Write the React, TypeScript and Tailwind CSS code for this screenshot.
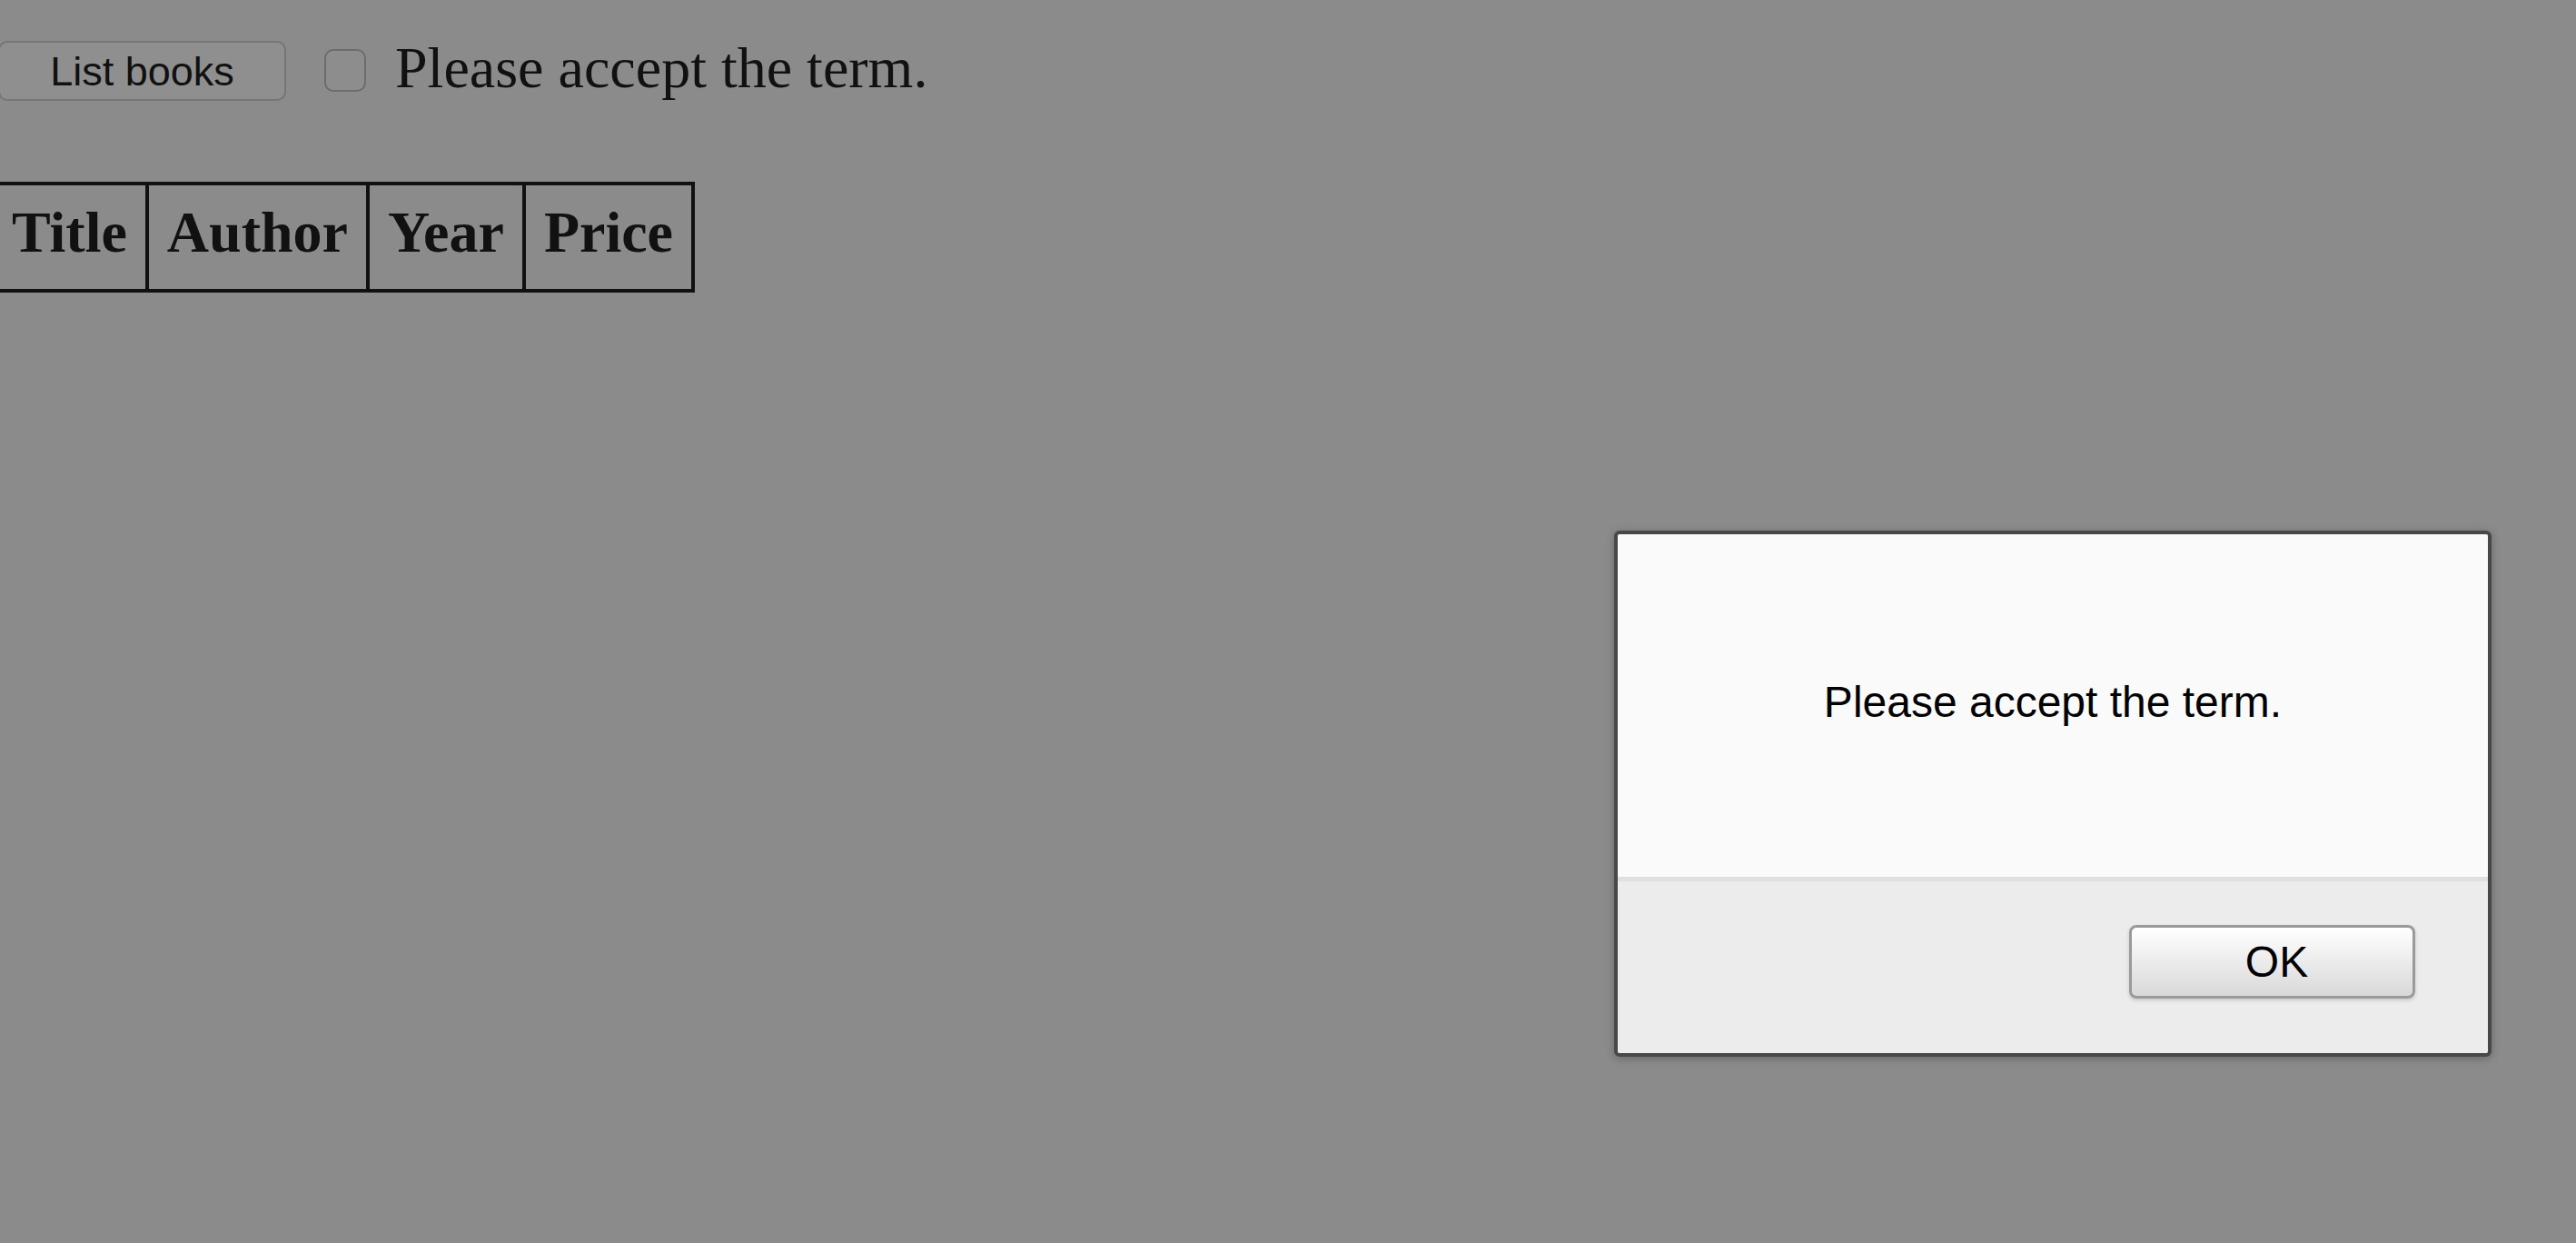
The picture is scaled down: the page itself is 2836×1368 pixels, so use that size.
import React from 'react';

const columns = ['Title', 'Author', 'Year', 'Price'];

function AlertDialog() {
  return (
    <div className="absolute left-[1777px] top-[584px] w-[966px] h-[579px] flex flex-col border-4 border-[#484848] rounded-[6px] overflow-hidden shadow-[0_2px_10px_rgba(0,0,0,0.25)]">
      {/* message */}
      <div className="h-[377px] bg-[#fafafa] flex items-center justify-center pb-[8px]">
        <p className="font-['Liberation_Sans',Arial,sans-serif] text-[48px] leading-normal text-black">
          Please accept the term.
        </p>
      </div>
      <div className="h-[5px] bg-[#e0e0e0]" />
      {/* actions */}
      <div className="flex-1 bg-[#ececec] flex justify-end items-start pt-[48px] pr-[80px]">
        <button className="w-[315px] h-[81px] rounded-[8px] border-[3px] border-[#9a9a9a] bg-gradient-to-b from-[#ffffff] to-[#d9d9d9] shadow-[0_2px_4px_rgba(0,0,0,0.15)] font-['Liberation_Sans',Arial,sans-serif] text-[48px] text-black pl-[10px]">
          OK
        </button>
      </div>
    </div>
  );
}

export default function App() {
  return (
    <div className="relative w-full min-h-screen h-[1368px] overflow-hidden bg-[#8b8b8b]">
      {/* toolbar row */}
      <div className="flex items-start">
        <button className="mt-[45px] -ml-[2px] w-[317px] h-[66px] rounded-[10px] border-2 border-[#767676] bg-[#8f8f8f] font-['Liberation_Sans',Arial,sans-serif] text-[45px] leading-none text-[#111]">
          List books
        </button>
        <span className="mt-[54px] ml-[42px] w-[46px] h-[47px] rounded-[10px] border-2 border-[#6c6c6c] bg-[#8d8d8d]" />
        <span className="mt-[43px] ml-[32px] font-['Liberation_Serif','Times_New_Roman',serif] text-[64px] leading-none text-[#111]">
          Please accept the term.
        </span>
      </div>

      {/* books table */}
      <table className="mt-[89px] -ml-[11px] border-collapse border-4 border-[#111]">
        <thead>
          <tr>
            {columns.map((c) => (
              <th
                key={c}
                className="border-4 border-[#111] px-[20px] pt-[15px] pb-[25px] font-['Liberation_Serif','Times_New_Roman',serif] text-[64px] font-bold leading-[74px] text-[#111]"
              >
                {c}
              </th>
            ))}
          </tr>
        </thead>
        <tbody />
      </table>

      <AlertDialog />
    </div>
  );
}
